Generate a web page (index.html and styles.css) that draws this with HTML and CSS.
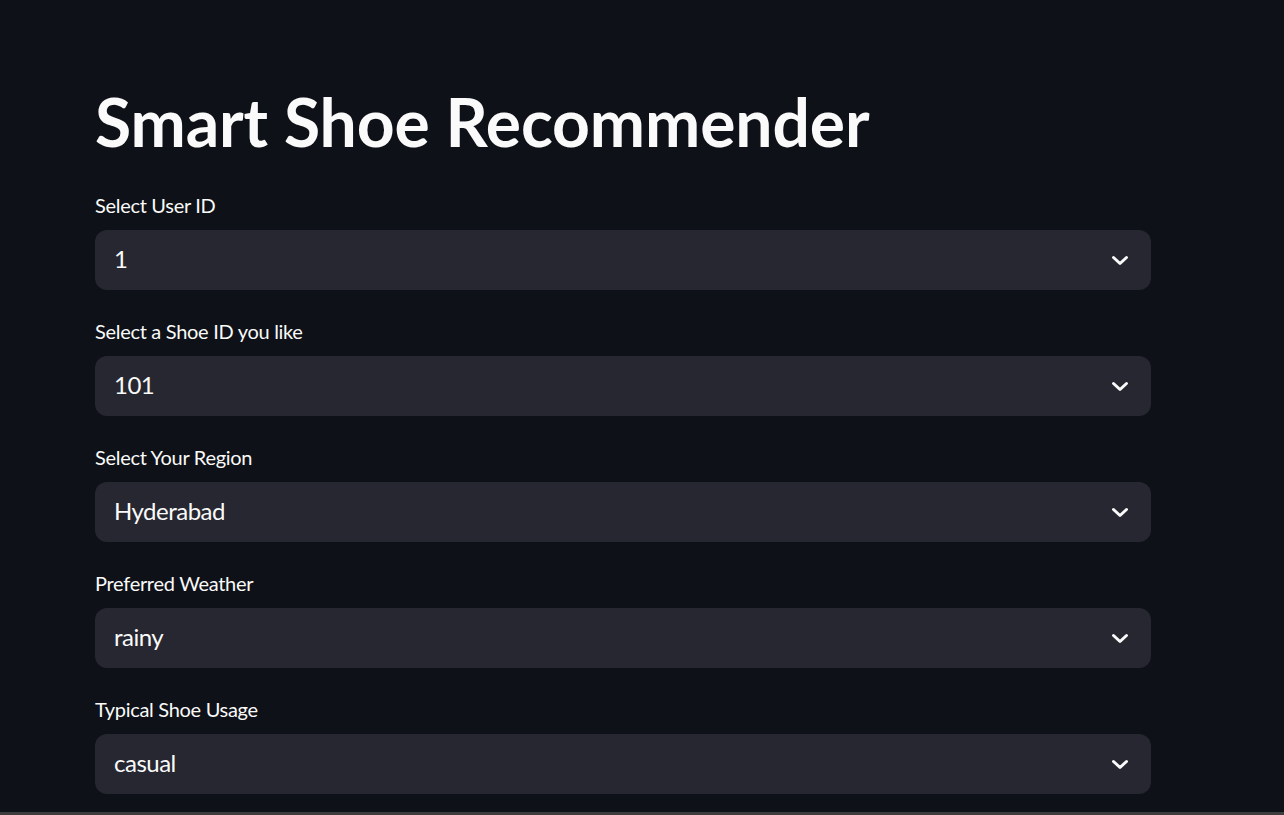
FILE: index.html
```html
<!DOCTYPE html>
<html lang="en">
<head>
<meta charset="utf-8">
<title>Smart Shoe Recommender</title>
<link rel="stylesheet" href="styles.css">
</head>
<body>
<main class="app">
  <section class="block">
    <h1 class="title">Smart Shoe Recommender</h1>
    <div class="widget">
      <div class="label">Select User ID</div>
      <div class="select"><span class="value">1</span><svg class="chev" viewBox="0 0 24 24" width="24" height="24"><path d="M5.5 9.5l6.5 6 6.5-6" fill="none" stroke="#fafafa" stroke-width="3" stroke-linecap="round" stroke-linejoin="round"/></svg></div>
    </div>
    <div class="widget">
      <div class="label">Select a Shoe ID you like</div>
      <div class="select"><span class="value">101</span><svg class="chev" viewBox="0 0 24 24" width="24" height="24"><path d="M5.5 9.5l6.5 6 6.5-6" fill="none" stroke="#fafafa" stroke-width="3" stroke-linecap="round" stroke-linejoin="round"/></svg></div>
    </div>
    <div class="widget">
      <div class="label">Select Your Region</div>
      <div class="select"><span class="value">Hyderabad</span><svg class="chev" viewBox="0 0 24 24" width="24" height="24"><path d="M5.5 9.5l6.5 6 6.5-6" fill="none" stroke="#fafafa" stroke-width="3" stroke-linecap="round" stroke-linejoin="round"/></svg></div>
    </div>
    <div class="widget">
      <div class="label">Preferred Weather</div>
      <div class="select"><span class="value">rainy</span><svg class="chev" viewBox="0 0 24 24" width="24" height="24"><path d="M5.5 9.5l6.5 6 6.5-6" fill="none" stroke="#fafafa" stroke-width="3" stroke-linecap="round" stroke-linejoin="round"/></svg></div>
    </div>
    <div class="widget">
      <div class="label">Typical Shoe Usage</div>
      <div class="select"><span class="value">casual</span><svg class="chev" viewBox="0 0 24 24" width="24" height="24"><path d="M5.5 9.5l6.5 6 6.5-6" fill="none" stroke="#fafafa" stroke-width="3" stroke-linecap="round" stroke-linejoin="round"/></svg></div>
    </div>
  </section>
</main>
<div class="bottom-bar"></div>
</body>
</html>
```

FILE: styles.css
```css
html, body {
  margin: 0;
  padding: 0;
  background: #0e1117;
  height: 815px;
  overflow: hidden;
}
body {
  font-family: "Lato", "Noto Sans", sans-serif;
  color: #fafafa;
  position: relative;
}
.app {
  padding: 82px 0 0 95px;
}
.block {
  width: 1056px;
  display: flex;
  flex-direction: column;
}
.title {
  margin: 0 0 33px 0;
  font-size: 66px;
  line-height: 79px;
  font-weight: 700;
  letter-spacing: -0.1px;
}
.widget {
  display: flex;
  flex-direction: column;
  margin-bottom: 30px;
}
.label {
  height: 36px;
  font-size: 20px;
  line-height: 22px;
  letter-spacing: -0.3px;
}
.select {
  height: 60px;
  background: #262730;
  border-radius: 12px;
  display: flex;
  align-items: center;
  justify-content: space-between;
  padding: 0 19px 0 19px;
  box-sizing: border-box;
}
.value {
  font-size: 24px;
  line-height: 28px;
  letter-spacing: -0.5px;
  margin-top: -3px;
}
.chev {
  display: block;
}
.bottom-bar {
  position: absolute;
  left: 0;
  right: 0;
  bottom: 0;
  height: 3px;
  background: #3d3d3d;
}
```
